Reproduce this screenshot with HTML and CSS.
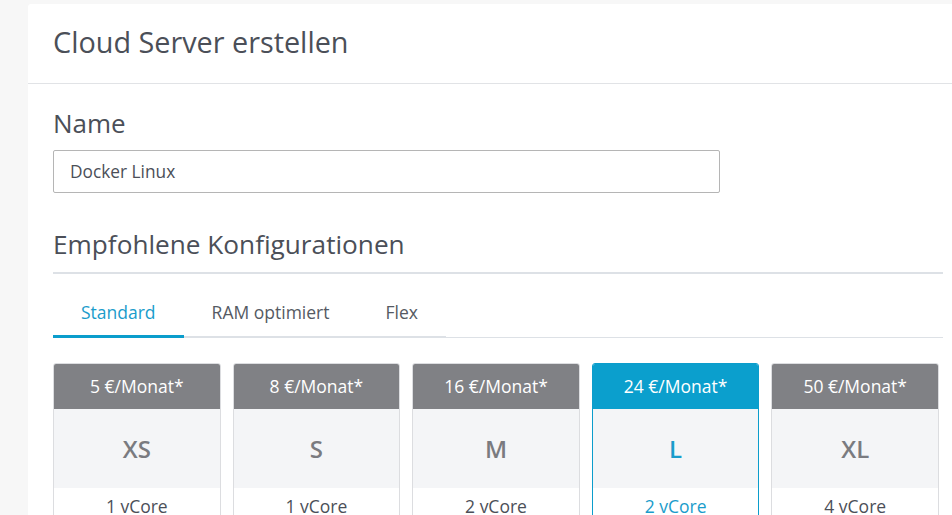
FILE: index.html
```html
<!DOCTYPE html>
<html lang="de">
<head>
<meta charset="utf-8">
<title>Cloud Server erstellen</title>
<link rel="stylesheet" href="styles.css">
</head>
<body>
<div class="panel">
  <div class="panel-header">
    <h1 class="title">Cloud Server erstellen</h1>
  </div>
  <div class="panel-body">
    <h2 class="section-label">Name</h2>
    <input class="text-input" type="text" value="Docker Linux">
    <h2 class="section-title">Empfohlene Konfigurationen</h2>
    <div class="tabs">
      <div class="tab active">Standard</div>
      <div class="tab">RAM optimiert</div>
      <div class="tab">Flex</div>
    </div>
    <div class="cards">
      <div class="card">
        <div class="card-price">5 €/Monat*</div>
        <div class="card-size">XS</div>
        <div class="card-spec">1 vCore</div>
      </div>
      <div class="card">
        <div class="card-price">8 €/Monat*</div>
        <div class="card-size">S</div>
        <div class="card-spec">1 vCore</div>
      </div>
      <div class="card">
        <div class="card-price">16 €/Monat*</div>
        <div class="card-size">M</div>
        <div class="card-spec">2 vCore</div>
      </div>
      <div class="card selected">
        <div class="card-price">24 €/Monat*</div>
        <div class="card-size">L</div>
        <div class="card-spec">2 vCore</div>
      </div>
      <div class="card">
        <div class="card-price">50 €/Monat*</div>
        <div class="card-size">XL</div>
        <div class="card-spec">4 vCore</div>
      </div>
    </div>
  </div>
</div>
</body>
</html>
```
FILE: styles.css
```css
* { box-sizing: border-box; }
html, body { margin: 0; padding: 0; }
body {
  background: #f7f7f7;
  font-family: "Open Sans", "Liberation Sans", sans-serif;
  color: #4b4f58;
  overflow: hidden;
  height: 515px;
}
.panel {
  margin: 4px 0 0 28px;
  background: #ffffff;
  border-top-left-radius: 3px;
  min-height: 600px;
}
.panel-header {
  height: 80px;
  border-bottom: 1px solid #e1e3e6;
  padding: 0 25px;
  display: flex;
  align-items: center;
}
.title {
  margin: 0 0 3px;
  font-size: 28.8px;
  font-weight: 400;
  color: #4b4f58;
  line-height: 36px;
}
.panel-body {
  padding: 22px 9px 0 25px;
}
.section-label {
  margin: 0;
  font-size: 26px;
  font-weight: 400;
  line-height: 34px;
  color: #4b4f58;
}
.text-input {
  display: block;
  margin-top: 10px;
  width: 667px;
  height: 43px;
  border: 1px solid #b5b5b5;
  border-radius: 2px;
  padding: 0 16px;
  font-family: "Open Sans", "Liberation Sans", sans-serif;
  font-size: 17.3px;
  color: #4b4f58;
  outline: none;
}
.section-title {
  margin: 33px 0 0;
  font-size: 26.2px;
  font-weight: 400;
  line-height: 36px;
  color: #4b4f58;
  padding-bottom: 10px;
  border-bottom: 2px solid #dde1e6;
}
.tabs {
  display: flex;
  margin-top: 14px;
  border-bottom: 1px solid #dde1e6;
  height: 50px;
}
.tab {
  padding: 0 28px;
  font-size: 17.5px;
  line-height: 48px;
  color: #555a63;
  border-bottom: 2px solid #dde1e6;
  margin-bottom: -1px;
}
.tab.active {
  color: #1a9ccb;
  border-bottom: 3px solid #0b9dcc;
}
.cards {
  display: grid;
  grid-template-columns: repeat(5, 1fr);
  gap: 12px;
  margin-top: 25px;
  padding-right: 4px;
}
.card {
  border: 1px solid #dcdde0;
  border-radius: 3px;
  overflow: hidden;
  background: #ffffff;
  text-align: center;
}
.card-price {
  background: #808185;
  color: #ffffff;
  font-size: 17.5px;
  height: 45px;
  line-height: 45px;
}
.card-size {
  background: #f4f5f7;
  color: #7a7b80;
  font-size: 24px;
  font-weight: 600;
  height: 79px;
  line-height: 79px;
}
.card-spec {
  font-size: 17.5px;
  line-height: 36px;
  color: #4b4f58;
}
.card.selected {
  border-color: #0b9dcc;
}
.card.selected .card-price {
  background: #0b9fcd;
}
.card.selected .card-size,
.card.selected .card-spec {
  color: #1a9ccb;
}
```
